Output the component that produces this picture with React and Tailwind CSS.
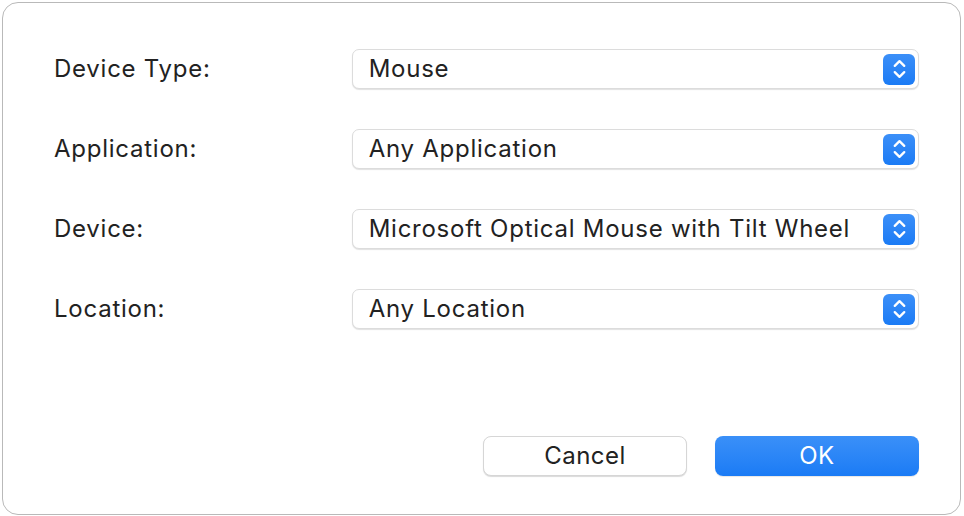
import { ChevronUp, ChevronDown } from "lucide-react";

const rows = [
  { label: "Device Type:", value: "Mouse" },
  { label: "Application:", value: "Any Application" },
  { label: "Device:", value: "Microsoft Optical Mouse with Tilt Wheel" },
  { label: "Location:", value: "Any Location" },
];

function Select({ value }) {
  return (
    <div className="flex h-[40px] w-[568px] items-center justify-between rounded-[7px] border border-[#dcdcdc] bg-white pl-[16px] pr-[3px] shadow-[0_1px_1px_rgba(0,0,0,0.12)]">
      <span className="text-[24px] tracking-[0.75px] text-[#222]">{value}</span>
      <div className="flex h-[31px] w-[32px] flex-col items-center justify-center rounded-[6px] bg-gradient-to-b from-[#3b8ff8] to-[#1a7bf5] text-white">
        <ChevronUp className="-mb-[4px] h-[19px] w-[19px]" strokeWidth={2.9} />
        <ChevronDown className="-mt-[4px] h-[19px] w-[19px]" strokeWidth={2.9} />
      </div>
    </div>
  );
}

export default function App() {
  return (
    <div className="h-[516px] w-[964px] bg-white p-[2px] font-['Inter','Liberation_Sans',Arial,sans-serif]">
      <div className="flex h-[513px] w-[959px] flex-col rounded-[16px] border border-[#b9b9b9] bg-white pl-[51px] pr-[41px] pt-[46px]">
        <div className="flex flex-col gap-[40px]">
          {rows.map((r) => (
            <div key={r.label} className="flex items-center">
              <span className="w-[298px] text-[24px] tracking-[0.75px] text-[#222]">{r.label}</span>
              <Select value={r.value} />
            </div>
          ))}
        </div>
        <div className="mt-[107px] flex justify-end gap-[28px]">
          <button className="h-[40px] w-[204px] rounded-[8px] border border-[#d6d6d6] bg-white text-[24px] tracking-[0.5px] text-[#222] shadow-[0_1px_1px_rgba(0,0,0,0.15)]">
            Cancel
          </button>
          <button className="h-[40px] w-[204px] rounded-[8px] bg-gradient-to-b from-[#3a90f8] to-[#1a7bf5] text-[24px] tracking-[0.5px] text-white shadow-[0_1px_1px_rgba(0,0,0,0.1)]">
            OK
          </button>
        </div>
      </div>
    </div>
  );
}
